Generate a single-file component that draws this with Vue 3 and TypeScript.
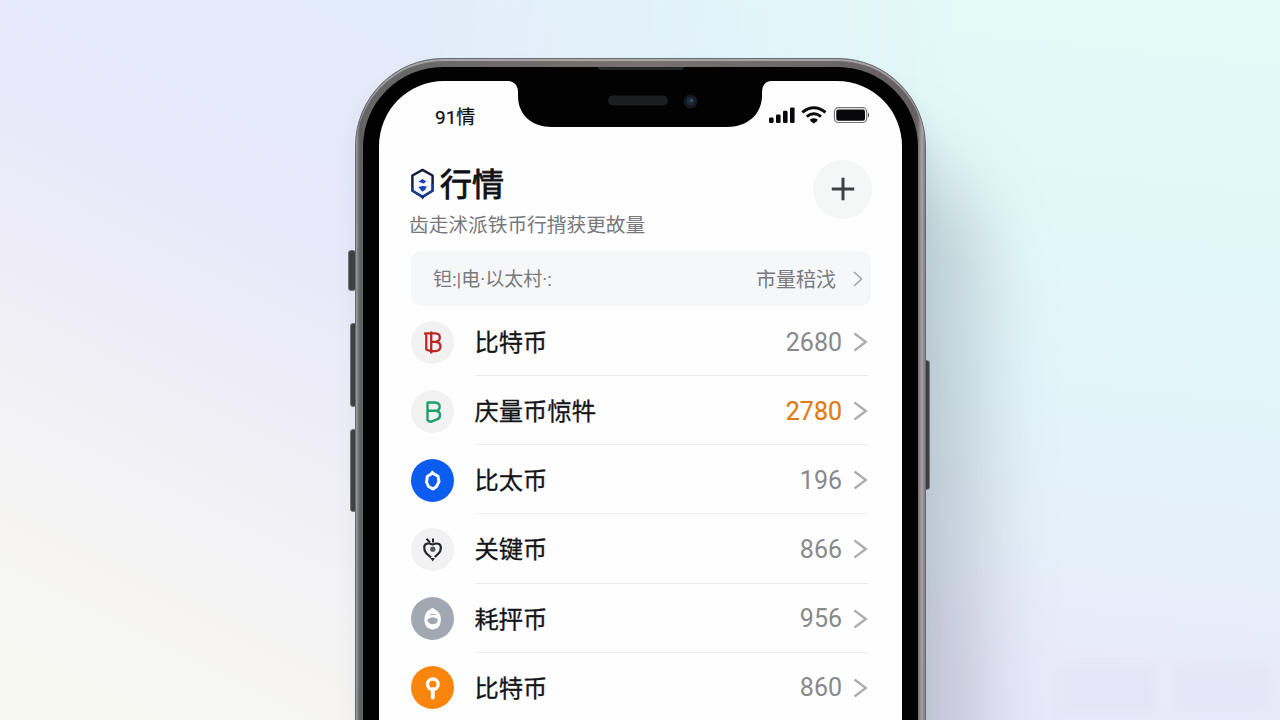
<script setup lang="ts">
interface Coin {
  name: string
  value: string
  icon: 'bitcoin' | 'letter' | 'ring' | 'berry' | 'helmet' | 'pin'
  highlight?: boolean
}

const coins: Coin[] = [
  { name: '比特币', value: '2680', icon: 'bitcoin' },
  { name: '庆量币惊牪', value: '2780', icon: 'letter', highlight: true },
  { name: '比太币', value: '196', icon: 'ring' },
  { name: '关键币', value: '866', icon: 'berry' },
  { name: '耗抨币', value: '956', icon: 'helmet' },
  { name: '比特币', value: '860', icon: 'pin' },
]
</script>

<template>
  <main class="stage">
    <i class="wash"></i>
    <i class="smudge"></i>
    <i class="shade"></i>
    <div class="phone">
      <i class="side mute"></i>
      <i class="side up"></i>
      <i class="side down"></i>
      <i class="side power"></i>
      <div class="bezel">
        <div class="screen">
          <svg class="notch" width="264" height="50" viewBox="0 0 264 50">
            <path d="M0 0V2C7 2 11 6 11 13V17C11 36 25 48 45 48H220C240 48 254 36 255 18V14C255 6 259 2 264 2V0Z" fill="#020203" />
            <rect x="101" y="16.500" width="60" height="10" rx="5" fill="#1c1d20" />
            <circle cx="183.500" cy="22.500" r="7" fill="#14181c" />
            <circle cx="183.500" cy="22.500" r="4" fill="#1b2b39" />
            <circle cx="184.500" cy="21.500" r="1.300" fill="#466178" />
          </svg>
          <i class="earpiece"></i>

          <div class="status">
            <span class="clock">91情</span>
            <svg class="signals" width="102" height="20" viewBox="0 0 102 20">
              <g fill="#08080a">
                <rect x="1" y="12.500" width="4.600" height="5.500" rx="1.300" />
                <rect x="8" y="9.500" width="4.600" height="8.500" rx="1.300" />
                <rect x="15" y="5.700" width="4.600" height="12.300" rx="1.300" />
                <rect x="22" y="2.500" width="4.600" height="15.500" rx="1.300" />
                <path d="M42 14.300Q45.800 12 49.600 14.300L49 16.200L45.800 18.400L42.600 16.200Z" />
                <rect x="68.300" y="4.500" width="28.700" height="11.200" rx="2" />
              </g>
              <path d="M34.300 7.400Q45.800-2 57.500 7.400M38.800 11.700Q45.800 6 53 11.700" fill="none" stroke="#08080a" stroke-width="2.900" />
              <rect x="66.400" y="2.700" width="32.300" height="14.800" rx="4" fill="none" stroke="#77777a" stroke-width="1.200" />
              <path d="M100 7.200Q102 10 100 12.800Z" fill="#333" />
            </svg>
          </div>

          <header class="header">
            <div class="headings">
              <div class="title-line">
                <svg class="logo" width="25" height="33" viewBox="0 0 25 33">
                  <path d="M12.500 1.900L22.600 7.500V22.800L12.500 28.900L2.400 22.800V7.500Z" fill="#f4f8ff" stroke="#151c38" stroke-width="2.500" stroke-linejoin="round" />
                  <path d="M2.400 19V22.800L12.500 28.900L22.600 22.800V16" fill="none" stroke="#1c3e99" stroke-width="2" />
                  <path d="M8.500 13.700L12.500 11L16.300 13.500L13.500 15.500ZM8.500 19L12.500 18L16.800 18.500L15 22L12.200 23.800Z" fill="#173fc0" />
                  <path d="M10 28H15L12.700 31.500Z" fill="#102a78" />
                </svg>
                <h1>行情</h1>
              </div>
              <p>齿走沭派铁币行揹获更故量</p>
            </div>
            <button class="add" aria-label="add">
              <svg width="24" height="24" viewBox="0 0 24 24"><path d="M12 .8V23.200M.8 12H23.200" stroke="#3e4043" stroke-width="3" /></svg>
            </button>
          </header>

          <div class="filter">
            <span class="query">钽:|电·以太村·:</span>
            <span class="sort">市量稖㳀</span>
            <svg width="12" height="18" viewBox="0 0 12 18"><path d="M2 2L9.500 9L2 16" fill="none" stroke="#a5a6a9" stroke-width="1.700" /></svg>
          </div>

          <ul class="list">
            <li v-for="(coin, index) in coins" :key="index">
              <span class="badge" :class="coin.icon">
                <svg width="43" height="43" viewBox="0 0 43 43" fill="none" stroke-linejoin="round">
                  <g v-if="coin.icon === 'bitcoin'" stroke="#bd2622" stroke-width="2.300">
                    <path d="M20 12.300H24.500C30.500 12.700 30 20.300 24.500 20.800H20M24.500 20.800C31.300 21.300 31 30 24.500 30.200H19" />
                    <path d="M13 12.600L20 12.200M15.300 12.500V28.500L20 30.300M20.200 10.500V32.500" />
                  </g>
                  <path v-else-if="coin.icon === 'letter'" d="M16.500 12.500V31M15.800 12.500H24C30.300 13 30 20.300 24.500 20.800H16.500M24.500 20.800C30.500 21.300 30 28 26 29.300L20.500 31.700L16.500 31" stroke="#19a369" stroke-width="2.400" />
                  <g v-else-if="coin.icon === 'ring'" stroke="#fff">
                    <path d="M21.500 14L27 17.300L28 22.500L25.500 27.500L22 30L17.500 27.500L15.500 23L16.300 17.500Z" stroke-width="3" />
                    <path d="M21.300 11.800V14" stroke-width="2" />
                  </g>
                  <g v-else-if="coin.icon === 'berry'" stroke="#24262b">
                    <path d="M17.500 15.300C12 15.600 12.300 21.500 15.500 25.500L20 29.500M24.800 15.500C31.500 15 31 22.500 26.500 26.500L23.800 29M17.500 15.300L21.500 16.500L24.800 15.500" stroke-width="2.200" />
                    <path d="M15.500 10.800L19 14.500M22 10.500V14.500" stroke-width="2" />
                    <circle cx="21.800" cy="21.200" r="2.600" fill="#55575c" stroke="none" />
                    <path d="M19.300 30H24L21.700 33.500Z" fill="#24262b" stroke="none" />
                  </g>
                  <g v-else-if="coin.icon === 'helmet'">
                    <path d="M21.500 10.800L26.500 14C31.500 19 30.500 27.500 26.500 31L21.500 32.800L17 31C12.500 27.500 12 19 16.500 14Z" fill="#fff" />
                    <path d="M17.300 18.300Q21.800 15.500 26.300 18.300Q22 17.500 17.300 18.300ZM16.300 22.500Q21.800 18 27 22.500Q26.500 27.300 21.800 27.300Q17 27.300 16.300 22.500Z" fill="#a2a8b2" />
                  </g>
                  <g v-else stroke="#fff">
                    <circle cx="21.800" cy="18.300" r="5.300" stroke-width="3.400" />
                    <path d="M21.800 23V31.500" stroke-width="3.900" stroke-linecap="round" />
                  </g>
                </svg>
              </span>
              <span class="row">
                <span class="name">{{ coin.name }}</span>
                <span class="value" :class="{ hot: coin.highlight }">{{ coin.value }}</span>
                <svg class="chevron" width="15" height="20" viewBox="0 0 15 20"><path d="M1.500 1.500L12.800 10L1.500 18.500" fill="none" stroke="#acadb0" stroke-width="2.300" /></svg>
              </span>
            </li>
          </ul>
        </div>
      </div>
    </div>
  </main>
</template>

<style>
body {
  margin: 0;
  overflow: hidden;
}
</style>

<style scoped>
* {
  box-sizing: border-box;
}

.stage {
  position: relative;
  isolation: isolate;
  width: 1280px;
  height: 720px;
  overflow: hidden;
  padding: 58px 0 0 355px;
  font-family: Roboto, 'Noto Sans CJK SC', sans-serif;
  background: linear-gradient(186deg, #e3faf7 0, #e2f8f8 30%, #e3f4f9 50%, #e5f0fa 66%, #e9e9fa 82%, #e9e8fb 100%);
}

.wash {
  position: absolute;
  z-index: -3;
  inset: 0 auto 0 0;
  width: 960px;
  background: linear-gradient(207deg, #e0eef9 0, #e3ecfa 26%, #e6e8fb 40%, #eae9fa 50%, #efeef6 64%, #f4f3f4 78%, #f8f8f2 96%);
  mask-image: linear-gradient(90deg, #000 45%, transparent 100%);
}

.smudge {
  position: absolute;
  z-index: -3;
  left: 1055px;
  top: 664px;
  width: 215px;
  height: 50px;
  border-radius: 10px;
  background: linear-gradient(90deg, rgba(226, 224, 240, .35) 0 46%, rgba(240, 238, 255, .3) 49% 53%, rgba(223, 226, 240, .35) 57%);
  filter: blur(5px);
}

.shade {
  position: absolute;
  z-index: -2;
  left: 500px;
  top: 145px;
  width: 480px;
  height: 800px;
  border-radius: 120px;
  background: rgba(86, 96, 112, .26);
  filter: blur(36px);
}

.phone {
  position: relative;
  width: 571px;
  height: 900px;
  padding: 8px 7px 0;
  border-radius: 88px;
  border: 1px solid #6a6b6e;
  background: linear-gradient(90deg, #9a9b9c 0, #5d5e5f 4px, #656565 8px, #77716f 50%, #655f62 calc(100% - 8px), #a9a4a8 calc(100% - 3px), #77777c 100%);
  box-shadow:
    inset 0 2px 1px #aaa9aa,
    0 12px 20px rgba(70, 85, 105, .08);
}

.side {
  position: absolute;
  z-index: -1;
  width: 7px;
  border-radius: 3px;
  border: 1px solid #77787b;
  background: #3e3f42;
}

.mute { left: -8px; top: 191px; height: 41px; width: 8px; }
.up { left: -6px; top: 264px; height: 84px; }
.down { left: -6px; top: 370px; height: 83px; }
.power { right: -5px; top: 301px; height: 130px; }

.bezel {
  height: 100%;
  padding: 14px 16px 0;
  border-radius: 80px 80px 0 0;
  background: #020203;
}

.screen {
  position: relative;
  width: 523px;
  height: 100%;
  border-radius: 65px 65px 0 0;
  padding: 0 31px 0 32px;
  background: #fefefe;
}

.notch {
  position: absolute;
  left: 128px;
  top: -2px;
}

.earpiece {
  position: absolute;
  left: 219px;
  top: -14px;
  width: 86px;
  height: 3px;
  border-radius: 0 0 3px 3px;
  background: #222426;
}

.status {
  display: flex;
  justify-content: space-between;
  height: 70px;
  padding: 24px 1px 0 24px;
}

.clock {
  height: 24px;
  color: #0c0c0e;
  font-size: 19px;
  line-height: 25px;
  -webkit-text-stroke: .2px;
}

.header {
  display: flex;
  justify-content: space-between;
  height: 100px;
  margin-left: -2px;
}

.title-line {
  display: flex;
  align-items: center;
  height: 64px;
  gap: 6px;
}

.logo {
  margin: 2px -1px 0 1px;
}

h1 {
  margin: -3px 0 0;
  color: #101114;
  font: 400 32px/46px 'Noto Sans CJK SC', sans-serif;
  -webkit-text-stroke: .9px;
}

p {
  margin: -3px 0 0;
  color: #77787c;
  font: 400 19.700px/24px 'Noto Sans CJK SC', sans-serif;
  white-space: nowrap;
}

.add {
  display: grid;
  place-items: center;
  width: 59px;
  height: 59px;
  margin: 8.500px -1px 0 0;
  padding: 0;
  border: 0;
  border-radius: 50%;
  background: #f5f6f6;
}

.filter {
  display: flex;
  align-items: center;
  width: 460px;
  height: 55px;
  padding: 0 7px 0 22px;
  border-radius: 10px;
  background: #f6f7f9;
  color: #77797d;
}

.query {
  flex: 1;
  padding-top: 2px;
  font-size: 19px;
  line-height: 28px;
}

.sort {
  margin-right: 16px;
  font: 400 20px/28px 'Noto Sans CJK SC', sans-serif;
}

.list {
  list-style: none;
  margin: 1px 0 0;
  padding: 0;
}

li {
  display: flex;
  height: 69.150px;
}

.badge {
  width: 43px;
  height: 43px;
  margin: 13.500px 21px 0 0;
  border-radius: 50%;
  background: #f2f2f3;
}

.badge svg {
  display: block;
}

.ring { background: #0c5cf0; }
.helmet { background: #a2a8b2; }
.pin { background: #fa850d; }

.row {
  display: flex;
  flex: 1;
  align-items: center;
  border-bottom: 1.500px solid #ececee;
  margin-right: 3px;
}

.name {
  flex: 1;
  margin-left: -.5px;
  color: #141518;
  font: 400 24.300px/36px 'Noto Sans CJK SC', sans-serif;
  -webkit-text-stroke: .3px;
}

.value {
  padding-top: 2px;
  color: #88898d;
  font-size: 25px;
}

.hot {
  color: #de7b12;
  -webkit-text-stroke: .2px;
}

.chevron {
  margin: 2px 0 0 11px;
}
</style>
